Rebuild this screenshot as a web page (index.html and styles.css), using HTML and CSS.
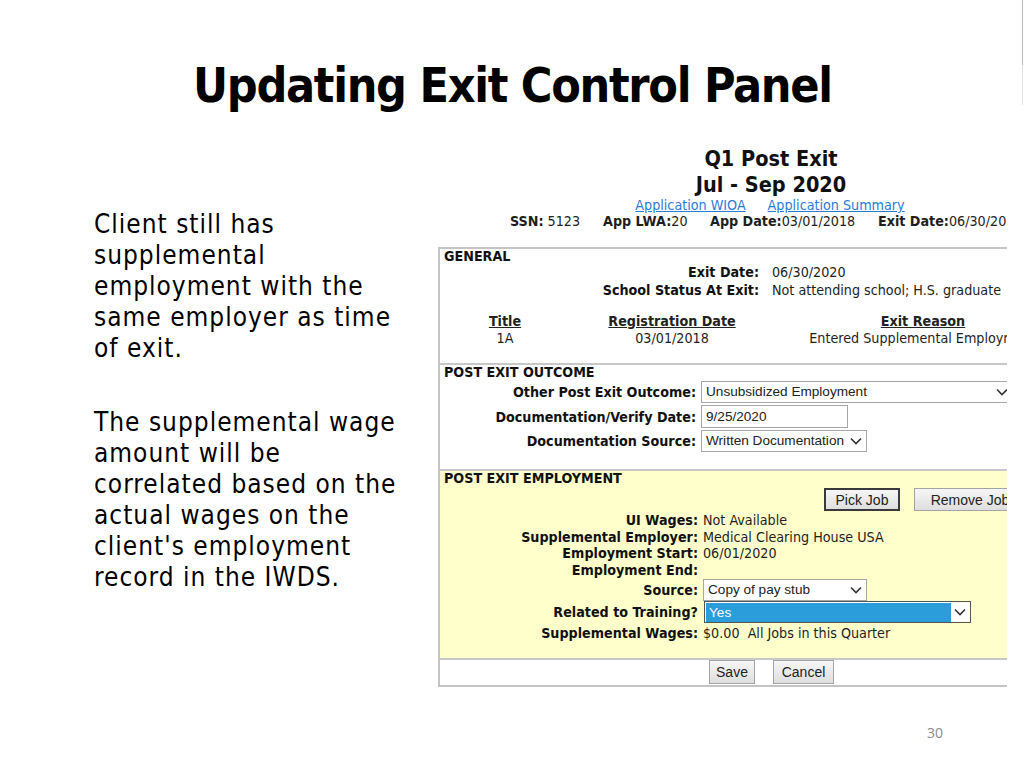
FILE: index.html
```html
<!DOCTYPE html>
<html>
<head>
<meta charset="utf-8">
<title>Updating Exit Control Panel</title>
<link rel="stylesheet" href="styles.css">
</head>
<body>
<div class="slide">
  <h1 class="title">Updating Exit Control Panel</h1>
  <div class="content">
    <div class="text">
      <p>Client still has supplemental employment with the same employer as time of exit.</p>
      <p>The supplemental wage amount will be correlated based on the actual wages on the client's employment record in the IWDS.</p>
    </div>
    <div class="shot">
      <div class="shot-inner">
        <div class="hdr">
          <div class="h-title">Q1 Post Exit</div>
          <div class="h-title">Jul - Sep 2020</div>
          <div class="links"><a class="lnk" href="#">Application WIOA</a><a class="lnk" href="#">Application Summary</a></div>
          <div class="ids">
            <span class="id id-ssn"><b>SSN:</b> 5123</span>
            <span class="id id-lwa"><b>App LWA:</b>20</span>
            <span class="id id-date"><b>App Date:</b>03/01/2018</span>
            <span class="id"><b>Exit Date:</b>06/30/2020</span>
          </div>
        </div>
        <div class="box">
          <div class="sec sec-general">
            <div class="sec-h">GENERAL</div>
            <div class="kv kv-general">
              <div class="k">Exit Date:</div><div class="v">06/30/2020</div>
              <div class="k">School Status At Exit:</div><div class="v">Not attending school; H.S. graduate</div>
            </div>
            <div class="tbl">
              <div class="th">Title</div><div class="th">Registration Date</div><div class="th">Exit Reason</div>
              <div class="td">1A</div><div class="td">03/01/2018</div><div class="td">Entered Supplemental Employment</div>
            </div>
          </div>
          <div class="sec sec-outcome">
            <div class="sec-h">POST EXIT OUTCOME</div>
            <div class="form form-outcome">
              <div class="k">Other Post Exit Outcome:</div>
              <div class="ctl sel w-outcome"><span class="ctl-t">Unsubsidized Employment</span><svg class="chev" viewBox="0 0 12 8"><path d="M1 1.5 L6 6.5 L11 1.5" /></svg></div>
              <div class="k">Documentation/Verify Date:</div>
              <div class="ctl inp w-date"><span class="ctl-t">9/25/2020</span></div>
              <div class="k">Documentation Source:</div>
              <div class="ctl sel w-src"><span class="ctl-t">Written Documentation</span><svg class="chev" viewBox="0 0 12 8"><path d="M1 1.5 L6 6.5 L11 1.5" /></svg></div>
            </div>
          </div>
          <div class="sec sec-emp">
            <div class="sec-h">POST EXIT EMPLOYMENT</div>
            <div class="btn-row">
              <span class="btn btn-focus">Pick Job</span>
              <span class="btn btn-remove">Remove Job</span>
            </div>
            <div class="kv kv-emp">
              <div class="k">UI Wages:</div><div class="v">Not Available</div>
              <div class="k">Supplemental Employer:</div><div class="v">Medical Clearing House USA</div>
              <div class="k">Employment Start:</div><div class="v">06/01/2020</div>
              <div class="k">Employment End:</div><div class="v"></div>
            </div>
            <div class="form form-emp">
              <div class="k">Source:</div>
              <div class="ctl sel w-pay"><span class="ctl-t">Copy of pay stub</span><svg class="chev" viewBox="0 0 12 8"><path d="M1 1.5 L6 6.5 L11 1.5" /></svg></div>
              <div class="k">Related to Training?</div>
              <div class="ctl sel sel-dark w-rel"><span class="ctl-t hl">Yes</span><svg class="chev" viewBox="0 0 12 8"><path d="M1 1.5 L6 6.5 L11 1.5" /></svg></div>
            </div>
            <div class="kv kv-wages">
              <div class="k">Supplemental Wages:</div><div class="v">$0.00&nbsp;&nbsp;All Jobs in this Quarter</div>
            </div>
          </div>
          <div class="sec sec-actions">
            <span class="btn btn-save">Save</span>
            <span class="btn btn-cancel">Cancel</span>
          </div>
        </div>
      </div>
    </div>
  </div>
  <div class="footer">30</div>
</div>
</body>
</html>
```

FILE: styles.css
```css
html, body {
  margin: 0;
  padding: 0;
  background: #ffffff;
}

.slide {
  position: relative;
  width: 1024px;
  height: 768px;
  overflow: hidden;
  background: #ffffff;
  display: flex;
  flex-direction: column;
  font-family: "DejaVu Sans Condensed", "DejaVu Sans", sans-serif;
  color: #000;
}

.slide::after {
  content: "";
  position: absolute;
  top: 0;
  right: 1px;
  width: 1px;
  height: 105px;
  background: linear-gradient(#c8b4bb 0, #c8b4bb 62%, #e4e4e4 62%, #e4e4e4 100%);
}

.title {
  margin: 0;
  padding: 56px 0 0 193px;
  font-family: "DejaVu Sans Condensed", "DejaVu Sans", sans-serif;
  font-size: 48px;
  font-weight: bold;
  letter-spacing: -1.3px;
  line-height: 58px;
}

.content {
  display: flex;
  align-items: flex-start;
}

.text {
  width: 318px;
  padding: 95px 0 0 94px;
  margin-right: 26px;
  font-family: "DejaVu Sans Condensed", "DejaVu Sans", sans-serif;
  font-size: 26px;
  letter-spacing: 1px;
  line-height: 31px;
}

.text p {
  margin: 0 0 43px 0;
}

.shot {
  width: 569px;
  overflow: hidden;
  margin-top: 32px;
}

.shot-inner {
  width: 666px;
  font-family: "DejaVu Sans Condensed", "DejaVu Sans", sans-serif;
  font-size: 14.2px;
  color: #1e1e1e;
}

.hdr {
  text-align: center;
}

.h-title {
  font-size: 21.5px;
  font-weight: bold;
  line-height: 26px;
  color: #111;
}

.links {
  line-height: 14px;
  font-size: 14.2px;
  display: flex;
  justify-content: center;
  gap: 22px;
  padding-right: 2px;
}

.lnk {
  color: #2a7bd6;
  text-decoration: underline;
}

.ids {
  display: flex;
  line-height: 18px;
  padding-left: 72px;
  white-space: nowrap;
  text-align: left;
}

.id {
  display: inline-block;
}

.id-ssn { width: 93px; }
.id-lwa { width: 107px; }
.id-date { width: 168px; }

.box {
  margin-top: 17px;
  border: 2px solid #c4c4c4;
  border-right: none;
}

.sec {
  border-top: 2px solid #c8c8c8;
}

.sec:first-child {
  border-top: none;
}

.sec-h {
  font-weight: bold;
  line-height: 14px;
  padding-left: 4px;
  color: #111;
}

.kv {
  display: grid;
  white-space: nowrap;
}

.k {
  text-align: right;
  font-weight: bold;
  color: #111;
  white-space: nowrap;
}

.kv-general {
  grid-template-columns: 319px 1fr;
  column-gap: 13px;
  line-height: 18px;
}

.sec-general {
  height: 114px;
}

.tbl {
  display: grid;
  grid-template-columns: 130px 204px 298px;
  margin-top: 14px;
  line-height: 17px;
  text-align: center;
  white-space: nowrap;
}

.th {
  font-weight: bold;
  text-decoration: underline;
  color: #222;
}

.sec-outcome {
  height: 104px;
}

.form {
  display: grid;
  align-items: center;
  white-space: nowrap;
}

.form-outcome {
  grid-template-columns: 256px 1fr;
  column-gap: 5px;
  row-gap: 2px;
  margin-top: 2px;
}

.ctl {
  box-sizing: border-box;
  height: 22px;
  display: flex;
  align-items: center;
  background: #fff;
  border: 1px solid #a6a6a6;
  font-family: "Liberation Sans", Arial, sans-serif;
  font-size: 13.6px;
  color: #222;
}

.ctl-t {
  flex: 1;
  padding-left: 4px;
  line-height: 20px;
  overflow: hidden;
}

.chev {
  width: 12px;
  height: 8px;
  margin: 0 4px 0 3px;
  flex: none;
}

.chev path {
  fill: none;
  stroke: #333;
  stroke-width: 1.6;
}

.inp {
  height: 23px;
}

.w-outcome { width: 312px; }
.w-date { width: 147px; }
.w-src { width: 166px; }
.w-pay { width: 164px; }
.w-rel { width: 267px; margin-left: 1px; }

.sel-dark {
  border: 1px solid #555;
}

.hl {
  background: #2b9ddb;
  color: #fff;
  align-self: stretch;
  line-height: 20px;
  margin: 1px 0 0 1px;
  padding-left: 3px;
}

.sec-emp {
  background: #ffffcc;
  height: 187px;
}

.btn-row {
  display: flex;
  margin-top: 3px;
  padding-left: 384px;
  gap: 14px;
}

.btn {
  box-sizing: border-box;
  display: inline-flex;
  align-items: center;
  justify-content: center;
  flex: none;
  height: 23px;
  background: linear-gradient(#f6f6f6, #dedede);
  border: 1px solid #a4a4a4;
  font-family: "Liberation Sans", Arial, sans-serif;
  font-size: 14px;
  color: #222;
  white-space: nowrap;
}

.btn-focus {
  width: 76px;
  border: 2px solid #3a3a3a;
}

.btn-remove {
  width: 112px;
}

.kv-emp {
  grid-template-columns: 258px 1fr;
  column-gap: 5px;
  margin-top: 1px;
  line-height: 16.5px;
}

.kv-emp .v {
  min-height: 16.5px;
}

.form-emp {
  grid-template-columns: 258px 1fr;
  column-gap: 5px;
  row-gap: 0;
  margin-top: 1px;
}

.kv-wages {
  grid-template-columns: 258px 1fr;
  column-gap: 5px;
  line-height: 18px;
  margin-top: 1px;
}

.sec-actions {
  display: flex;
  height: 25px;
  padding-left: 269px;
  gap: 18px;
  align-items: flex-start;
}

.btn-save {
  width: 46px;
  height: 24px;
}

.btn-cancel {
  width: 61px;
  height: 24px;
}

.footer {
  margin-top: auto;
  align-self: flex-end;
  padding: 0 81px 25px 0;
  font-family: "Open Sans", "DejaVu Sans", sans-serif;
  font-size: 14px;
  line-height: 20px;
  color: #8c8c8c;
}
```
